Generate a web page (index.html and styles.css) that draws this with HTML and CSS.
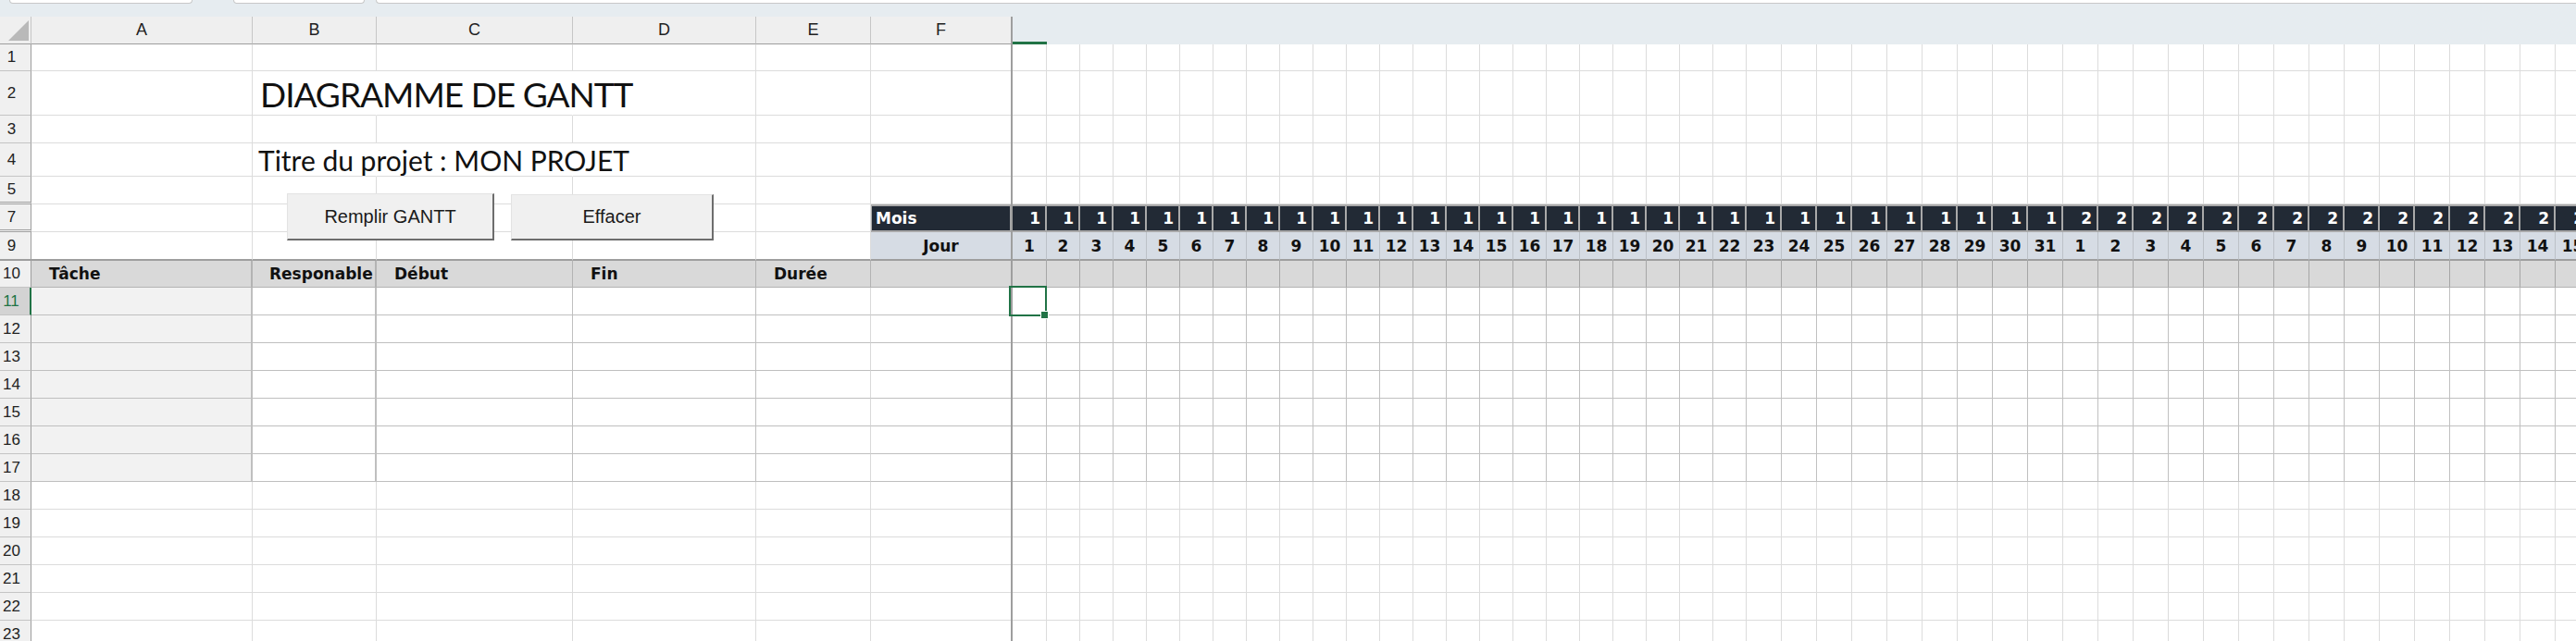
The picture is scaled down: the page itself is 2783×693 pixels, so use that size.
FILE: index.html
```html
<!DOCTYPE html>
<html lang="fr">
<head>
<meta charset="utf-8">
<title>Diagramme de Gantt</title>
<link rel="stylesheet" href="styles.css">
</head>
<body>
<div class="app">
  <div class="topbar">
    <div class="tb-box tb-name"></div>
    <div class="tb-box tb-mid"></div>
    <div class="tb-box tb-formula"></div>
  </div>
  <div class="sheet" id="sheet"></div>
  <button class="btn btn-fill" type="button">Remplir GANTT</button>
  <button class="btn btn-clear" type="button">Effacer</button>
</div>
<script src="script.js"></script>
</body>
</html>
```

FILE: styles.css
```css
html, body { margin: 0; padding: 0; background: #fff; }
body { width: 2783px; height: 693px; overflow: hidden; font-family: "Liberation Sans", Arial, sans-serif; }
.app { position: relative; width: 2783px; height: 693px; overflow: hidden; }

.topbar { height: 18px; background: #e6ecf0; display: flex; align-items: flex-start; }
.tb-box { box-sizing: content-box; height: 3px; background: #fff; border: 1px solid #c8c8c8; border-top: none; border-radius: 0 0 6px 6px; }
.tb-name { margin-left: 10px; width: 196px; }
.tb-mid { margin-left: 44px; width: 140px; }
.tb-formula { margin-left: 12px; flex: 1; border-right: none; border-radius: 0 0 0 6px; }

.sheet { display: flex; flex-direction: column; }
.row { display: flex; height: 30px; flex: none; }
.r1 { height: 29px; }
.r2 { height: 48px; }
.r4 { height: 36px; }
.r9 { height: 31px; }
.r10 { height: 29px; }

.cell { box-sizing: border-box; flex: none; height: 100%; border-right: 1px solid #dcdcdc; border-bottom: 1px solid #dcdcdc; display: flex; align-items: center; white-space: nowrap; overflow: hidden; }
.days { display: flex; flex: none; height: 100%; }
.freeze { width: 2px; flex: none; background: #9e9e9e; }

.col-a { width: 239px; }
.col-b { width: 134px; }
.col-c { width: 212px; }
.col-d { width: 198px; }
.col-e { width: 124px; }
.col-f { width: 151px; border-right: none; }
.dw36 { width: 36px; }
.dw37 { width: 37px; }
.dw38 { width: 38px; }

/* row headers */
.rh { width: 34px; background: #f0f0f0; border-right: 1px solid #9e9e9e; border-bottom: 1px solid #c4c4c4; justify-content: center; padding-right: 8px; font-size: 17px; color: #222; }
.rh.hid { border-bottom: 3px double #a0a0a0; }
.rh.rh-sel { background: #d3d3d3; color: #217346; border-right: 2px solid #217346; }

/* column headers */
.hdr .cell { border-bottom: 1px solid #9e9e9e; }
.colhead { background: #efefef; border-right-color: #c6c6c6; justify-content: center; font-size: 18px; color: #222; }
.colhead.col-f { border-right: none; }
.corner { position: relative; background: #efefef; border-right: 1px solid #c6c6c6; }
.corner::after { content: ""; position: absolute; right: 2px; bottom: 3px; width: 0; height: 0; border-left: 22px solid transparent; border-bottom: 22px solid #b9b9b9; }
.hdr .dayhead { background: #e6ecf0; border: none; }
.hdr .dayhead.sel { box-shadow: inset 0 -3px 0 #217346; }

/* title texts */
.big { overflow: visible; position: relative; z-index: 1; font-family: Lato, "Liberation Sans", sans-serif; color: #111; line-height: normal; }
.ov { border-right-color: transparent; }
.big.title { font-size: 37px; letter-spacing: -1px; padding-left: 8px; align-items: flex-end; }
.big.sub { font-size: 30px; padding-left: 6px; align-items: flex-start; }

/* bold Century-Gothic-like cells */
.mois, .jour, .th, .m, .j { font-family: "DejaVu Sans", sans-serif; font-weight: 700; font-size: 17px; }

.mois { background: #222a35; color: #fff; padding-left: 4px; border-top: 2px solid #a9a9a9; border-left: 1px solid #a9a9a9; border-bottom: 2px solid #a9a9a9; border-right: 1px solid #a9a9a9; }
.k-jour .cell { border-bottom: 2px solid #9e9e9e; }
.jour { background: #d6dce4; color: #111; justify-content: center; }

.th { background: #d9d9d9; color: #111; padding-left: 19px; border-right-color: #b3b3b3; border-bottom-color: #b3b3b3; }
.th.col-b { padding-left: 18px; }
.td { border-right-color: #bfbfbf; border-bottom-color: #bfbfbf; }
.th.col-a, .th.col-b, .td.col-a, .td.col-b { border-right-width: 2px; }
.td.col-a { background: #f2f2f2; }
.td.col-e { border-right-color: #d9d9d9; }

.m { background: #222a35; color: #fff; justify-content: flex-end; padding-right: 5px; border-right: 2px solid #a9a9a9; border-top: 2px solid #a9a9a9; border-bottom: 2px solid #a9a9a9; }
.j { background: #d6dce4; color: #111; justify-content: center; border-right-color: #bcc1c7; }
.thd { background: #d9d9d9; border-right-color: #a6a6a6; border-bottom-color: #b3b3b3; }
.tdd { border-right-color: #c0c0c0; border-bottom-color: #c0c0c0; }

/* active cell */
.active { position: relative; overflow: visible; z-index: 2; }
.active::before { content: ""; position: absolute; left: -4px; top: -2px; right: -1px; bottom: -2px; border: 2px solid #217346; }
.active::after { content: ""; position: absolute; right: -3px; bottom: -5px; width: 7px; height: 7px; background: #217346; border: 1px solid #fff; }

/* buttons */
.btn { position: absolute; box-sizing: border-box; margin: 0; padding: 0; background: #f0f0f0; border: 1px solid #e3e3e3; border-right: 2px solid #6d6d6d; border-bottom: 2px solid #6d6d6d; font-family: "Liberation Sans", Arial, sans-serif; font-size: 20px; color: #1a1a1a; text-align: center; }
.btn-fill { left: 310px; top: 209px; width: 224px; height: 51px; }
.btn-clear { left: 552px; top: 210px; width: 219px; height: 50px; }
```

FILE: script.js
```js
(function () {
  var sheet = document.getElementById('sheet');
  var cols = ['A', 'B', 'C', 'D', 'E', 'F'];
  var days = [];
  var i;
  for (i = 1; i <= 31; i++) days.push({ m: 1, d: i });
  for (i = 1; i <= 16; i++) days.push({ m: 2, d: i });

  function el(cls, text) {
    var e = document.createElement('div');
    e.className = cls;
    if (text !== undefined && text !== null && text !== '') e.textContent = text;
    return e;
  }
  function dayW(idx) { return idx === 0 ? ' dw37' : (idx < 22 ? ' dw36' : ' dw38'); }

  var hdr = el('row hdr');
  hdr.appendChild(el('cell rh corner'));
  cols.forEach(function (c) { hdr.appendChild(el('cell colhead col-' + c.toLowerCase(), c)); });
  hdr.appendChild(el('freeze'));
  var band = el('days');
  days.forEach(function (d, idx) { band.appendChild(el('cell dayhead' + dayW(idx) + (idx === 0 ? ' sel' : ''))); });
  hdr.appendChild(band);
  sheet.appendChild(hdr);

  var rows = [
    { n: 1, kind: 'plain' }, { n: 2, kind: 'title' }, { n: 3, kind: 'plain' }, { n: 4, kind: 'sub' },
    { n: 5, kind: 'plain', hid: true }, { n: 7, kind: 'mois', hid: true }, { n: 9, kind: 'jour' }, { n: 10, kind: 'th' }
  ];
  var r;
  for (r = 11; r <= 17; r++) rows.push({ n: r, kind: 'td' });
  for (r = 18; r <= 23; r++) rows.push({ n: r, kind: 'plain' });

  var thText = { A: 'Tâche', B: 'Responable', C: 'Début', D: 'Fin', E: 'Durée', F: '' };

  rows.forEach(function (row) {
    var rowEl = el('row r' + row.n + ' k-' + row.kind);
    rowEl.appendChild(el('cell rh' + (row.hid ? ' hid' : '') + (row.n === 11 ? ' rh-sel' : ''), String(row.n)));
    cols.forEach(function (c) {
      var cls = 'cell col-' + c.toLowerCase();
      var txt = null;
      if (row.kind === 'title' || row.kind === 'sub') {
        if (c === 'B') {
          cls += ' ov big ' + row.kind;
          txt = row.kind === 'title' ? 'DIAGRAMME DE GANTT' : 'Titre du projet : MON PROJET';
        } else if (c === 'C') {
          cls += ' ov';
        }
      }
      if (row.kind === 'mois' && c === 'F') { cls += ' mois'; txt = 'Mois'; }
      if (row.kind === 'jour' && c === 'F') { cls += ' jour'; txt = 'Jour'; }
      if (row.kind === 'th') { cls += ' th'; txt = thText[c]; }
      if (row.kind === 'td') { cls += ' td'; }
      rowEl.appendChild(el(cls, txt));
    });
    rowEl.appendChild(el('freeze'));
    var dc = el('days');
    days.forEach(function (d, idx) {
      var cls = 'cell day' + dayW(idx);
      var txt = null;
      if (row.kind === 'mois') { cls += ' m'; txt = String(d.m); }
      else if (row.kind === 'jour') { cls += ' j'; txt = String(d.d); }
      else if (row.kind === 'th') { cls += ' thd'; }
      else if (row.kind === 'td') { cls += ' tdd'; }
      if (row.n === 11 && idx === 0) cls += ' active';
      dc.appendChild(el(cls, txt));
    });
    rowEl.appendChild(dc);
    sheet.appendChild(rowEl);
  });
})();
```
